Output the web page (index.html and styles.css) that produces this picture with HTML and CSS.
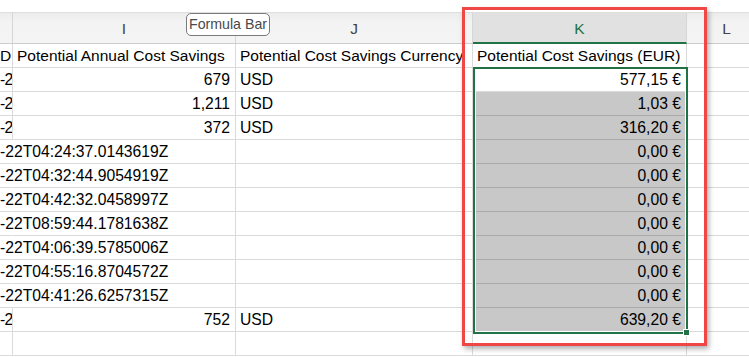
FILE: index.html
```html
<!DOCTYPE html>
<html>
<head>
<meta charset="utf-8">
<link rel="stylesheet" href="styles.css">
</head>
<body>
<div class="sheet">
  <div class="colhdr">
    <div class="ch h"></div>
    <div class="ch i">I</div>
    <div class="ch j">J</div>
    <div class="ch k active-col">K</div>
    <div class="ch l">L</div>
  </div>

  <div class="row">
    <div class="cell h title">D</div>
    <div class="cell i title">Potential Annual Cost Savings</div>
    <div class="cell j title">Potential Cost Savings Currency</div>
    <div class="cell k title">Potential Cost Savings (EUR)</div>
    <div class="cell l"></div>
  </div>

  <div class="row">
    <div class="cell h">-2</div>
    <div class="cell i num">679</div>
    <div class="cell j">USD</div>
    <div class="cell k num cur">577,15 €</div>
    <div class="cell l"></div>
  </div>
  <div class="row">
    <div class="cell h">-2</div>
    <div class="cell i num">1,211</div>
    <div class="cell j">USD</div>
    <div class="cell k num sel">1,03 €</div>
    <div class="cell l"></div>
  </div>
  <div class="row">
    <div class="cell h">-2</div>
    <div class="cell i num">372</div>
    <div class="cell j">USD</div>
    <div class="cell k num sel">316,20 €</div>
    <div class="cell l"></div>
  </div>
  <div class="row">
    <div class="cell h spill">-22T04:24:37.0143619Z</div>
    <div class="cell i"></div>
    <div class="cell j"></div>
    <div class="cell k num sel">0,00 €</div>
    <div class="cell l"></div>
  </div>
  <div class="row">
    <div class="cell h spill">-22T04:32:44.9054919Z</div>
    <div class="cell i"></div>
    <div class="cell j"></div>
    <div class="cell k num sel">0,00 €</div>
    <div class="cell l"></div>
  </div>
  <div class="row">
    <div class="cell h spill">-22T04:42:32.0458997Z</div>
    <div class="cell i"></div>
    <div class="cell j"></div>
    <div class="cell k num sel">0,00 €</div>
    <div class="cell l"></div>
  </div>
  <div class="row">
    <div class="cell h spill">-22T08:59:44.1781638Z</div>
    <div class="cell i"></div>
    <div class="cell j"></div>
    <div class="cell k num sel">0,00 €</div>
    <div class="cell l"></div>
  </div>
  <div class="row">
    <div class="cell h spill">-22T04:06:39.5785006Z</div>
    <div class="cell i"></div>
    <div class="cell j"></div>
    <div class="cell k num sel">0,00 €</div>
    <div class="cell l"></div>
  </div>
  <div class="row">
    <div class="cell h spill">-22T04:55:16.8704572Z</div>
    <div class="cell i"></div>
    <div class="cell j"></div>
    <div class="cell k num sel">0,00 €</div>
    <div class="cell l"></div>
  </div>
  <div class="row">
    <div class="cell h spill">-22T04:41:26.6257315Z</div>
    <div class="cell i"></div>
    <div class="cell j"></div>
    <div class="cell k num sel">0,00 €</div>
    <div class="cell l"></div>
  </div>
  <div class="row">
    <div class="cell h">-2</div>
    <div class="cell i num">752</div>
    <div class="cell j">USD</div>
    <div class="cell k num sel">639,20 €</div>
    <div class="cell l"></div>
  </div>
  <div class="row">
    <div class="cell h"></div>
    <div class="cell i"></div>
    <div class="cell j"></div>
    <div class="cell k"></div>
    <div class="cell l"></div>
  </div>

  <div class="selection"></div>
  <div class="fill-handle"></div>
  <div class="tooltip">Formula Bar</div>
  <div class="callout"></div>
</div>
</body>
</html>
```

FILE: styles.css
```css
html, body {
  margin: 0;
  padding: 0;
  background: #ffffff;
}

body {
  font-family: "Liberation Sans", Arial, sans-serif;
}

.sheet {
  position: relative;
  width: 749px;
  height: 357px;
  padding-top: 12px;
  box-sizing: border-box;
  overflow: hidden;
}

.colhdr {
  display: flex;
  height: 32px;
  background: linear-gradient(#ececec, #f3f3f3 30%, #f4f4f4);
  border-top: 1px solid #dedede;
  box-sizing: border-box;
}

.ch {
  flex: none;
  box-sizing: border-box;
  height: 31px;
  border-right: 1px solid #d6d6d6;
  border-bottom: 1px solid #cdcdcd;
  text-align: center;
  font-size: 15.5px;
  line-height: 32px;
  color: #444444;
}

.ch.active-col {
  background: #e1e1e1;
  color: #217346;
  border-bottom: 2px solid #217346;
}

.row {
  display: flex;
  height: 24px;
}

.cell {
  flex: none;
  box-sizing: border-box;
  height: 24px;
  border-right: 1px solid #dadada;
  border-bottom: 1px solid #dadada;
  padding: 0 4px;
  font-size: 15.7px;
  line-height: 23px;
  color: #000000;
  white-space: nowrap;
  overflow: hidden;
}

.title {
  font-size: 15.5px;
}

.h {
  width: 13px;
  padding: 0;
  letter-spacing: -0.6px;
}

.h.spill {
  overflow: visible;
  letter-spacing: 0;
  border-right-color: transparent;
}

.i {
  width: 223px;
}

.j {
  width: 237px;
}

.k {
  width: 214px;
}

.l {
  width: 80px;
}

.num {
  text-align: right;
  padding-right: 5px;
}

.sel {
  background: #c8c8c8;
  border-bottom-color: #aaaaaa;
}

.selection {
  position: absolute;
  left: 473px;
  top: 67px;
  width: 215px;
  height: 267px;
  box-sizing: border-box;
  border: 2px solid #217346;
  box-shadow: inset 0 0 0 1px #ffffff;
}

.fill-handle {
  position: absolute;
  left: 683px;
  top: 329px;
  width: 5px;
  height: 5px;
  background: #217346;
  border: 1px solid #ffffff;
}

.tooltip {
  position: absolute;
  left: 186px;
  top: 13px;
  width: 84px;
  height: 23px;
  box-sizing: border-box;
  background: #ffffff;
  border: 1px solid #7a7a7a;
  border-radius: 5px;
  font-size: 14.2px;
  line-height: 21px;
  text-align: center;
  color: #4a4a4a;
  white-space: nowrap;
}

.callout {
  position: absolute;
  left: 462px;
  top: 7px;
  width: 245px;
  height: 339px;
  box-sizing: border-box;
  border: 3px solid #f04646;
  box-shadow: 2px 3px 5px rgba(0, 0, 0, 0.3);
}
```
